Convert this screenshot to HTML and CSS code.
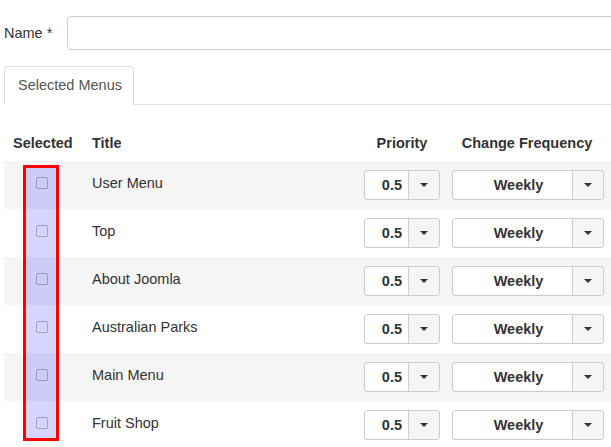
FILE: index.html
```html
<!DOCTYPE html>
<html>
<head>
<meta charset="utf-8">
<link rel="stylesheet" href="styles.css">
</head>
<body>
<div class="page">
  <div class="name-row">
    <label class="name-label">Name *</label>
    <div class="name-input"></div>
  </div>
  <div class="tabs">
    <div class="tab">Selected Menus</div>
    <div class="tab-fill"></div>
  </div>
  <div class="table-wrap">
    <table class="menus">
      <thead>
        <tr>
          <th class="c-sel">Selected</th>
          <th class="c-title">Title</th>
          <th class="c-pri">Priority</th>
          <th class="c-freq">Change Frequency</th>
        </tr>
      </thead>
      <tbody>
        <tr class="odd"><td class="c-sel"><span class="cb"></span></td><td class="c-title">User Menu</td><td class="c-pri"><div class="sel pri"><span class="val">0.5</span><span class="arr"><i class="caret"></i></span></div></td><td class="c-freq"><div class="sel freq"><span class="val">Weekly</span><span class="arr"><i class="caret"></i></span></div></td></tr>
        <tr><td class="c-sel"><span class="cb"></span></td><td class="c-title">Top</td><td class="c-pri"><div class="sel pri"><span class="val">0.5</span><span class="arr"><i class="caret"></i></span></div></td><td class="c-freq"><div class="sel freq"><span class="val">Weekly</span><span class="arr"><i class="caret"></i></span></div></td></tr>
        <tr class="odd"><td class="c-sel"><span class="cb"></span></td><td class="c-title">About Joomla</td><td class="c-pri"><div class="sel pri"><span class="val">0.5</span><span class="arr"><i class="caret"></i></span></div></td><td class="c-freq"><div class="sel freq"><span class="val">Weekly</span><span class="arr"><i class="caret"></i></span></div></td></tr>
        <tr><td class="c-sel"><span class="cb"></span></td><td class="c-title">Australian Parks</td><td class="c-pri"><div class="sel pri"><span class="val">0.5</span><span class="arr"><i class="caret"></i></span></div></td><td class="c-freq"><div class="sel freq"><span class="val">Weekly</span><span class="arr"><i class="caret"></i></span></div></td></tr>
        <tr class="odd"><td class="c-sel"><span class="cb"></span></td><td class="c-title">Main Menu</td><td class="c-pri"><div class="sel pri"><span class="val">0.5</span><span class="arr"><i class="caret"></i></span></div></td><td class="c-freq"><div class="sel freq"><span class="val">Weekly</span><span class="arr"><i class="caret"></i></span></div></td></tr>
        <tr><td class="c-sel"><span class="cb"></span></td><td class="c-title">Fruit Shop</td><td class="c-pri"><div class="sel pri"><span class="val">0.5</span><span class="arr"><i class="caret"></i></span></div></td><td class="c-freq"><div class="sel freq"><span class="val">Weekly</span><span class="arr"><i class="caret"></i></span></div></td></tr>
      </tbody>
    </table>
    <div class="highlight"></div>
  </div>
</div>
</body>
</html>
```
FILE: styles.css
```css
html, body {
  margin: 0;
  padding: 0;
  overflow: hidden;
  background: #fff;
}
body {
  font-family: "Liberation Sans", Arial, sans-serif;
  font-size: 14.5px;
  color: #333;
}
.page {
  width: 640px;
  padding: 16px 0 0 4px;
}
.name-row {
  display: flex;
  align-items: center;
  height: 34px;
}
.name-label {
  width: 63px;
  line-height: 20px;
  padding-bottom: 1px;
}
.name-input {
  flex: 1;
  height: 32px;
  border: 1px solid #ccc;
  border-radius: 4px;
  background: #fff;
}
.tabs {
  display: flex;
  margin-top: 16px;
}
.tab {
  width: 102px;
  height: 37px;
  line-height: 37px;
  padding: 0 13px;
  border: 1px solid #ddd;
  border-bottom: 1px solid transparent;
  border-radius: 4px 4px 0 0;
  color: #555;
  white-space: nowrap;
}
.tab-fill {
  flex: 1;
  border-bottom: 1px solid #ddd;
}
.table-wrap {
  position: relative;
  margin-top: 20px;
}
.menus {
  border-collapse: collapse;
  width: 612px;
  table-layout: fixed;
}
.menus th, .menus td {
  box-sizing: border-box;
}
.menus th {
  height: 36px;
  padding: 0 0 0 9px;
  font-weight: bold;
  text-align: left;
  vertical-align: middle;
  line-height: 20px;
  white-space: nowrap;
}
.menus th.c-title { padding-left: 8px; }
.menus th.c-pri, .menus th.c-freq {
  text-align: center;
  padding: 0;
}
.menus th.c-pri { padding-left: 4px; }
.menus th.c-freq { padding-right: 6px; }
.c-sel { width: 80px; }
.c-title { width: 272px; }
.c-pri { width: 88px; }
.c-freq { width: 172px; }
.menus td {
  height: 48px;
  padding: 0;
  vertical-align: top;
}
.menus tbody tr.odd td { background: #f5f5f5; }
.menus td.c-sel {
  padding: 16px 0 0 32px;
}
.menus td.c-title {
  padding: 12px 0 0 8px;
  line-height: 20px;
}
.menus td.c-pri {
  padding: 9px 0 0 8px;
}
.menus td.c-freq {
  padding: 9px 0 0 8px;
}
.cb {
  display: block;
  width: 10px;
  height: 10px;
  border: 1px solid rgba(60, 60, 90, 0.35);
  border-radius: 2px;
}
.sel {
  display: flex;
  height: 28px;
  border: 1px solid #ccc;
  border-radius: 3px;
  background: #fff;
  font-weight: bold;
  font-size: 14.5px;
}
.sel.pri { width: 74px; }
.sel.freq { width: 150px; }
.sel .val {
  flex: 1;
  line-height: 28px;
  text-align: center;
}
.sel.pri .val {
  text-align: right;
  padding-right: 6px;
}
.sel.freq .val {
  padding-left: 12px;
}
.sel .arr {
  width: 30px;
  border-left: 1px solid #ccc;
  background: #f5f5f5;
  border-radius: 0 3px 3px 0;
  display: flex;
  align-items: center;
  justify-content: center;
}
.caret {
  display: block;
  width: 0;
  height: 0;
  border-left: 4px solid transparent;
  border-right: 4px solid transparent;
  border-top: 4px solid #333;
}
.highlight {
  position: absolute;
  left: 19px;
  top: 40px;
  width: 30px;
  height: 270px;
  border: 3px solid #f00;
  background: rgba(20, 20, 255, 0.18);
}
```
